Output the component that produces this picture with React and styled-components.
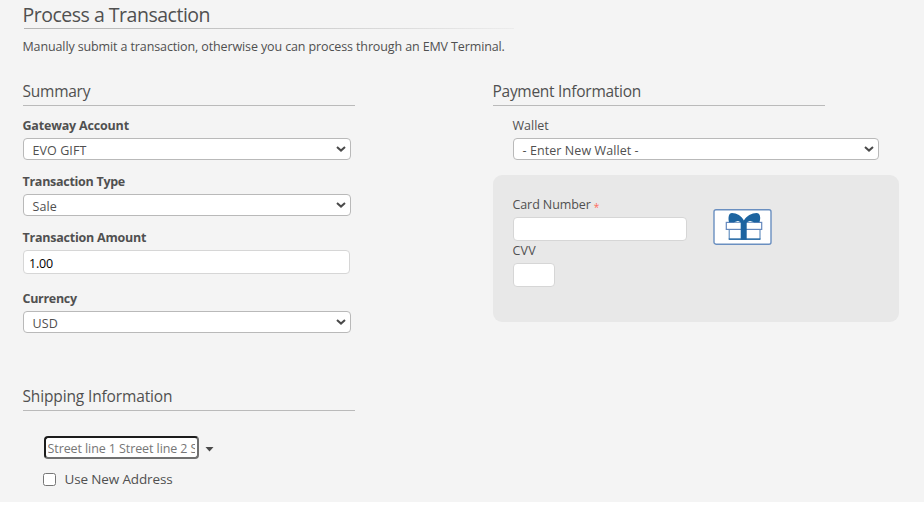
import React from "react";
import styled, { createGlobalStyle } from "styled-components";

const GlobalStyle = createGlobalStyle`
  * { box-sizing: border-box; }
  body {
    margin: 0;
    background: #fff;
    color: #505050;
    font: 12.5px/18px "Open Sans", "Noto Sans", sans-serif;
    overflow: hidden;
  }
  input { font-family: inherit; margin: 0; }
`;

const Page = styled.main`
  height: 502px;
  padding: 3px 25px 0 23px;
  background: #f4f4f4;
`;

const Title = styled.h1`
  margin: 0 0 0 -0.5px;
  font-size: 19.5px;
  font-weight: 400;
  line-height: 24px;
  letter-spacing: -0.49px;
`;

const TitleRule = styled.div`
  width: 490px;
  height: 1px;
  margin: 1px 0 9px 1px;
  background: linear-gradient(to right, #b4b4b4, #c6c6c6 45%, #ececec);
`;

const Intro = styled.p`
  margin: 0 0 25px -0.5px;
  letter-spacing: -0.12px;
`;

const Columns = styled.div`
  display: grid;
  grid-template-columns: 332px 406px;
  column-gap: 138px;
  align-items: start;
`;

const Heading = styled.h2`
  width: 332px;
  margin: 0 0 11px;
  padding-bottom: 4px;
  border-bottom: 1px solid #bababa;
  font-size: 15.5px;
  font-weight: 400;
  line-height: 20px;
  letter-spacing: ${(p) => p.$track || 0}px;
  text-indent: -0.5px;
`;

const Field = styled.div`
  display: flex;
  flex-direction: column;
  margin-bottom: ${(p) => p.$gap || 0}px;
`;

const Label = styled.label`
  height: 18px;
  margin-bottom: 3px;
  font-weight: ${(p) => (p.$strong ? 700 : 400)};
  letter-spacing: ${(p) => p.$track || 0}px;
  text-indent: -0.5px;
  white-space: nowrap;
`;

const Required = styled.span`
  margin-left: 3px;
  color: #ff6a5a;
  font-size: 10px;
  line-height: 10px;
  vertical-align: -2px;
`;

const SelectBox = styled.div`
  display: flex;
  align-items: center;
  justify-content: space-between;
  width: ${(p) => p.$width}px;
  height: 22px;
  padding: 3px 4px 0 8.5px;
  border: 1px solid #b9b9b9;
  border-radius: 4px;
  background: #fff;
  letter-spacing: 0.08px;
`;

const Chevron = styled.svg`
  width: 10px;
  height: 6px;
  margin-top: -3px;
  fill: none;
  stroke: #4a4a4a;
  stroke-width: 2;
`;

const TextInput = styled.input`
  width: ${(p) => p.$width}px;
  height: 24px;
  padding: 2px 5px 0;
  border: 1px solid #d6d6d6;
  border-radius: 4px;
  background: #fff;
  color: #000;
  font-size: 12.5px;
  letter-spacing: -0.2px;
  outline: none;
`;

const WalletField = styled(Field)`
  padding-left: 20px;
  margin-bottom: 15px;
`;

const CardPanel = styled.div`
  display: flex;
  gap: 26px;
  height: 147px;
  padding: 21px 20px;
  border-radius: 9px;
  background: #e8e8e8;
`;

const CvvField = styled(Field)`
  margin-top: 1px;
`;

const GiftCard = styled.svg`
  width: 59px;
  height: 37px;
  margin-top: 13px;
`;

const Shipping = styled.section`
  margin-top: 53px;
`;

const AddressRow = styled.div`
  display: flex;
  align-items: center;
  gap: 6px;
  margin: 25px 0 11px 21px;
`;

const AddressInput = styled.input`
  width: 155px;
  height: 23px;
  padding: 1px 2px 0 1.5px;
  border: 2px solid;
  border-color: #1c1c1c #707070 #707070 #1c1c1c;
  border-radius: 4px;
  background: #fff;
  font-size: 12.5px;
  letter-spacing: -0.09px;
  outline: none;
  &::placeholder { color: #777; opacity: 1; }
`;

const Caret = styled.svg`
  width: 9px;
  height: 5px;
  margin-top: 3px;
  fill: #4a4a4a;
`;

const CheckLabel = styled.label`
  display: flex;
  align-items: center;
  gap: 8.5px;
  margin-left: 20px;
  font-size: 13.5px;
  letter-spacing: -0.14px;
`;

const Checkbox = styled.input`
  width: 13px;
  height: 13px;
`;

function Select({ value, width = 328 }) {
  return (
    <SelectBox $width={width} role="combobox" tabIndex={0}>
      <span>{value}</span>
      <Chevron viewBox="0 0 10 6"><path d="M1 1l4 3.6L9 1" /></Chevron>
    </SelectBox>
  );
}

function GiftIcon() {
  return (
    <GiftCard viewBox="0 0 59 37">
      <rect x="1" y="0.7" width="57" height="34.5" rx="2" fill="#fff" stroke="#6a8fc0" strokeWidth="1.4" />
      <path d="M16.200 20V30.200H47V20" fill="#fff" stroke="#4b7db5" />
      <path d="M15.700 30.200H47.500" stroke="#1d64a0" strokeWidth="1.2" />
      <rect x="13.300" y="13.400" width="35.400" height="7" fill="#fff" stroke="#6488bd" strokeWidth="1.200" />
      <path d="M27.700 12h6v18.700h-6z" fill="#1d64a0" />
      <path d="M30.900 11.500C29 7 23.500 4 19 4C15.500 4 15 9 16 13.200H46.500C48 9 47.300 4 43.500 4C39 4 33 7 30.900 11.500Z" fill="#1d64a0" />
      <path d="M21 13.200L25 12L27.700 13.200ZM33.700 13.200L37 12L41 13.200Z" fill="#fff" />
    </GiftCard>
  );
}

export default function App() {
  return (
    <>
      <GlobalStyle />
      <Page>
        <Title>Process a Transaction</Title>
        <TitleRule />
        <Intro>Manually submit a transaction, otherwise you can process through an EMV Terminal.</Intro>
        <Columns>
          <section>
            <Heading $track={-0.24}>Summary</Heading>
            <Field $gap={13}>
              <Label $strong $track={-0.18}>Gateway Account</Label>
              <Select value="EVO GIFT" />
            </Field>
            <Field $gap={13}>
              <Label $strong $track={-0.28}>Transaction Type</Label>
              <Select value="Sale" />
            </Field>
            <Field $gap={16}>
              <Label $strong $track={-0.23}>Transaction Amount</Label>
              <TextInput $width={327} defaultValue="1.00" />
            </Field>
            <Field>
              <Label $strong $track={-0.3}>Currency</Label>
              <Select value="USD" />
            </Field>
          </section>
          <section>
            <Heading $track={-0.28}>Payment Information</Heading>
            <WalletField>
              <Label>Wallet</Label>
              <Select value="- Enter New Wallet -" width={366} />
            </WalletField>
            <CardPanel>
              <div>
                <Field>
                  <Label $track={-0.1}>Card Number<Required>*</Required></Label>
                  <TextInput $width={174} />
                </Field>
                <CvvField>
                  <Label $track={0.2}>CVV</Label>
                  <TextInput $width={42} />
                </CvvField>
              </div>
              <GiftIcon />
            </CardPanel>
          </section>
        </Columns>
        <Shipping>
          <Heading $track={-0.14}>Shipping Information</Heading>
          <AddressRow>
            <AddressInput placeholder="Street line 1 Street line 2 Street line 3" />
            <Caret viewBox="0 0 9 5"><path d="M0.500 0h8l-4 4.500z" /></Caret>
          </AddressRow>
          <CheckLabel>
            <Checkbox type="checkbox" />
            Use New Address
          </CheckLabel>
        </Shipping>
      </Page>
    </>
  );
}
